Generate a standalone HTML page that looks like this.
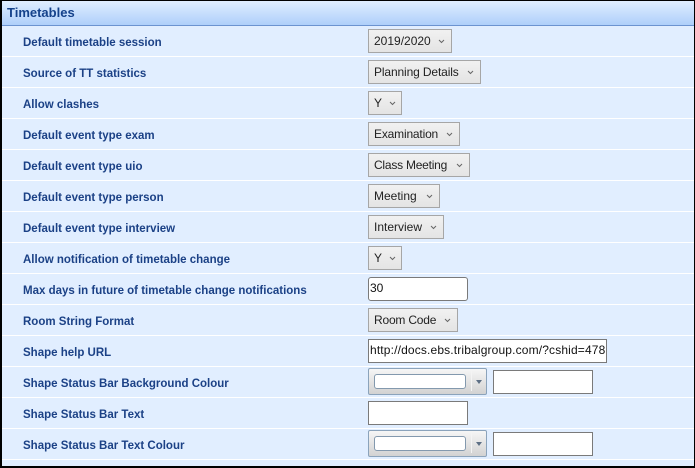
<!DOCTYPE html>
<html><head><meta charset="utf-8"><style>
html,body{margin:0;padding:0;background:#000;}
body{width:695px;height:468px;position:relative;overflow:hidden;font-family:"Liberation Sans",sans-serif;}
#w{position:absolute;left:2px;top:1px;width:692px;height:465px;background:#e1eeff;overflow:hidden;}
#h{position:absolute;left:0;top:0;width:692px;height:24px;background:linear-gradient(#e0eeff,#aecffa);border-bottom:1px solid #6b93d0;}
#h span{position:absolute;left:5px;top:4px;font-weight:bold;font-size:13px;line-height:16px;color:#15428b;}
.s{position:absolute;left:0;width:692px;height:1px;background:#fff;}
.l{position:absolute;left:21px;font-weight:bold;font-size:11.5px;line-height:14px;color:#1b4186;white-space:nowrap;}
.d{position:absolute;left:366px;height:22px;box-sizing:content-box;border:1px solid #a6a6a6;background:linear-gradient(#f1f1f1,#e4e4e4);font-size:12px;line-height:22px;color:#222;}
.d span{position:absolute;left:5px;top:0;white-space:nowrap;}
.d svg{position:absolute;top:9px;}
.t{position:absolute;left:366px;height:22px;border:1px solid #7a7a7a;background:#fff;font-size:12px;line-height:21px;color:#111;white-space:nowrap;overflow:hidden;}
.cb{position:absolute;left:366px;width:117px;height:25px;border:1px solid #8ba3bb;border-radius:2px;background:linear-gradient(#f6f6f6,#d2d2d2);}
.cb i{position:absolute;left:5px;top:5px;width:90px;height:13px;background:#fff;border:1px solid #8399ae;border-radius:3px;}
.cb b{position:absolute;left:102px;top:2px;width:1px;height:20px;background:#f4f4f4;}
.cb u{position:absolute;left:107px;top:11px;width:0;height:0;border-left:3px solid transparent;border-right:3px solid transparent;border-top:4px solid #5d6f85;}
</style></head><body><div id="w">
<div id="h"><span>Timetables</span></div>
<div class="s" style="top:55px"></div>
<div class="s" style="top:86px"></div>
<div class="s" style="top:117px"></div>
<div class="s" style="top:148px"></div>
<div class="s" style="top:179px"></div>
<div class="s" style="top:210px"></div>
<div class="s" style="top:241px"></div>
<div class="s" style="top:272px"></div>
<div class="s" style="top:303px"></div>
<div class="s" style="top:334px"></div>
<div class="s" style="top:365px"></div>
<div class="s" style="top:396px"></div>
<div class="s" style="top:427px"></div>
<div class="s" style="top:458px"></div>

<div class="l" style="top:35px">Default timetable session</div>
<div class="l" style="top:66px">Source of TT statistics</div>
<div class="l" style="top:97px">Allow clashes</div>
<div class="l" style="top:128px">Default event type exam</div>
<div class="l" style="top:159px">Default event type uio</div>
<div class="l" style="top:190px">Default event type person</div>
<div class="l" style="top:221px">Default event type interview</div>
<div class="l" style="top:252px">Allow notification of timetable change</div>
<div class="l" style="top:283px">Max days in future of timetable change notifications</div>
<div class="l" style="top:314px">Room String Format</div>
<div class="l" style="top:345px">Shape help URL</div>
<div class="l" style="top:376px">Shape Status Bar Background Colour</div>
<div class="l" style="top:407px">Shape Status Bar Text</div>
<div class="l" style="top:438px">Shape Status Bar Text Colour</div>

<div class="d" style="top:28px;width:82px"><span>2019/2020</span><svg style="left:69px" width="7" height="5" viewBox="0 0 7 5"><path d="M1 1l2.5 2.5L6 1" fill="none" stroke="#666" stroke-width="1"/></svg></div>
<div class="d" style="top:59px;width:111px"><span style="letter-spacing:-.13px">Planning Details</span><svg style="left:98px" width="7" height="5" viewBox="0 0 7 5"><path d="M1 1l2.5 2.5L6 1" fill="none" stroke="#666" stroke-width="1"/></svg></div>
<div class="d" style="top:90px;width:32px"><span>Y</span><svg style="left:20px" width="7" height="5" viewBox="0 0 7 5"><path d="M1 1l2.5 2.5L6 1" fill="none" stroke="#666" stroke-width="1"/></svg></div>
<div class="d" style="top:121px;width:90px"><span style="letter-spacing:-.18px">Examination</span><svg style="left:77px" width="7" height="5" viewBox="0 0 7 5"><path d="M1 1l2.5 2.5L6 1" fill="none" stroke="#666" stroke-width="1"/></svg></div>
<div class="d" style="top:152px;width:100px"><span style="letter-spacing:-.23px">Class Meeting</span><svg style="left:87px" width="7" height="5" viewBox="0 0 7 5"><path d="M1 1l2.5 2.5L6 1" fill="none" stroke="#666" stroke-width="1"/></svg></div>
<div class="d" style="top:183px;width:70px"><span>Meeting</span><svg style="left:57px" width="7" height="5" viewBox="0 0 7 5"><path d="M1 1l2.5 2.5L6 1" fill="none" stroke="#666" stroke-width="1"/></svg></div>
<div class="d" style="top:214px;width:74px"><span>Interview</span><svg style="left:61px" width="7" height="5" viewBox="0 0 7 5"><path d="M1 1l2.5 2.5L6 1" fill="none" stroke="#666" stroke-width="1"/></svg></div>
<div class="d" style="top:245px;width:32px"><span>Y</span><svg style="left:20px" width="7" height="5" viewBox="0 0 7 5"><path d="M1 1l2.5 2.5L6 1" fill="none" stroke="#666" stroke-width="1"/></svg></div>
<div class="t" style="top:276px;border-radius:3px;padding-left:1px;width:97px">30</div>
<div class="d" style="top:307px;width:88px"><span style="letter-spacing:-.2px">Room Code</span><svg style="left:75px" width="7" height="5" viewBox="0 0 7 5"><path d="M1 1l2.5 2.5L6 1" fill="none" stroke="#666" stroke-width="1"/></svg></div>
<div class="t" style="top:338px;width:236px;padding-left:1px;letter-spacing:.15px">http://docs.ebs.tribalgroup.com/?cshid=478</div>
<div class="cb" style="top:367px"><i></i><b></b><u></u></div>
<div class="t" style="top:369px;left:491px;width:98px"></div>
<div class="t" style="top:400px;width:98px"></div>
<div class="cb" style="top:429px"><i></i><b></b><u></u></div>
<div class="t" style="top:431px;left:491px;width:98px"></div>
</div></body></html>
